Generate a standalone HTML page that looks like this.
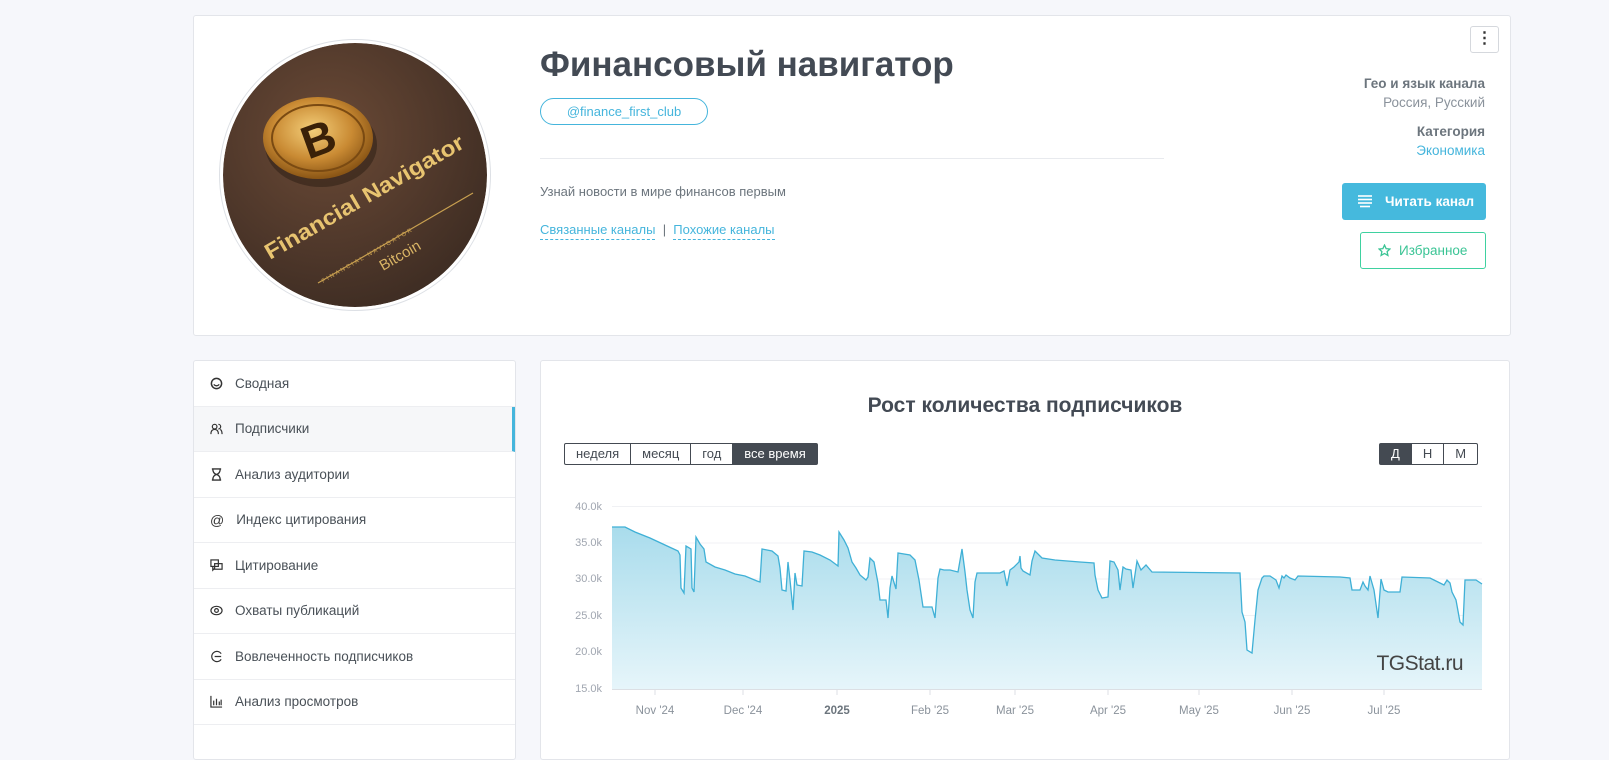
<!DOCTYPE html>
<html><head><meta charset="utf-8"><style>
*{box-sizing:border-box;margin:0;padding:0}
body{width:1609px;height:757px;overflow:hidden;background:#f6f7fb;font-family:"Liberation Sans","Noto Sans CJK SC",sans-serif;color:#495057;position:relative}
.card{position:absolute;background:#fff;border:1px solid #e3e5ea;border-radius:3px}
.a{position:absolute}
.nav div{height:45.5px;border-bottom:1px solid #edeef1;display:flex;align-items:center;padding-left:16px;font-size:13.5px;color:#495057}
.nav svg{margin-right:12px}
.seg{position:absolute;display:flex;border:1px solid #444a52;border-radius:2px;font-size:13px;height:22px}
.seg span{padding:0 11px;line-height:20px;border-right:1px solid #444a52;color:#444a52}
.seg span:last-child{border-right:0}
.seg .on{background:#444a52;color:#fff}
</style></head><body>
<div class="card" style="left:193px;top:15px;width:1318px;height:321px"></div>
<!-- avatar -->
<div class="a" style="left:219px;top:39px;width:272px;height:272px;border-radius:50%;border:1px solid #dde0e5;background:#fff"></div>
<svg class="a" style="left:223px;top:43px" width="264" height="264" viewBox="0 0 264 264">
<defs><radialGradient id="lg" cx="40%" cy="35%" r="75%"><stop offset="0" stop-color="#6b4a36"/><stop offset="0.6" stop-color="#4e372a"/><stop offset="1" stop-color="#3a2a21"/></radialGradient>
<radialGradient id="cg" cx="45%" cy="40%" r="60%"><stop offset="0" stop-color="#f4cf7a"/><stop offset="0.6" stop-color="#c98a33"/><stop offset="1" stop-color="#8a5515"/></radialGradient>
<clipPath id="cc"><circle cx="132" cy="132" r="132"/></clipPath></defs>
<g clip-path="url(#cc)">
<circle cx="132" cy="132" r="132" fill="url(#lg)"/>
<ellipse cx="98" cy="102" rx="56" ry="42" fill="#2a1c12" opacity="0.5"/>
<ellipse cx="95" cy="95" rx="55" ry="41" fill="url(#cg)"/>
<ellipse cx="95" cy="95" rx="46" ry="33" fill="none" stroke="#7a4a12" stroke-width="2"/>
<text x="95" y="112" text-anchor="middle" font-family="Liberation Sans" font-weight="bold" font-size="46" fill="#3a2108" transform="rotate(-20 95 95)">B</text>
<text x="47" y="217" font-family="Liberation Sans" font-weight="bold" font-size="22" fill="#e8c470" textLength="226" lengthAdjust="spacingAndGlyphs" transform="rotate(-30 47 217)">Financial Navigator</text>
<line x1="95" y1="240" x2="250" y2="150" stroke="#c9a050" stroke-width="1.2"/>
<text x="100" y="240" font-family="Liberation Sans" font-size="6" fill="#c9a050" letter-spacing="2" transform="rotate(-30 100 240)">FINANCIAL NAVIGATOR</text>
<text x="160" y="228" font-family="Liberation Sans" font-size="15" fill="#d9b465" transform="rotate(-30 160 228)">Bitcoin</text>
</g>
</svg>
<div class="a" style="left:540px;top:45px;font-size:35px;font-weight:bold;color:#434a54">Финансовый навигатор</div>
<div class="a" style="left:540px;top:98px;width:168px;height:27px;border:1px solid #45b5dc;border-radius:14px;color:#45b5dc;font-size:13px;text-align:center;line-height:25px">@finance_first_club</div>
<div class="a" style="left:540px;top:158px;width:624px;height:1px;background:#e8eaee"></div>
<div class="a" style="left:540px;top:184px;font-size:13px;color:#6c757d">Узнай новости в мире финансов первым</div>
<div class="a" style="left:540px;top:222px;font-size:13px;color:#45b5dc"><span style="border-bottom:1px dashed #45b5dc;padding-bottom:2px">Связанные каналы</span><span style="color:#6c757d"> &nbsp;| &nbsp;</span><span style="border-bottom:1px dashed #45b5dc;padding-bottom:2px">Похожие каналы</span></div>
<div class="a" style="left:1470px;top:26px;width:29px;height:27px;border:1px solid #d5d8dd;border-radius:3px;text-align:center;font-weight:bold;line-height:24px;font-size:16px;color:#333">⋮</div>
<div class="a" style="right:124px;top:74px;text-align:right;font-size:13.5px;line-height:19px">
<div style="font-weight:bold;color:#6c757d">Гео и язык канала</div><div style="color:#8a929b">Россия, Русский</div>
<div style="font-weight:bold;color:#6c757d;margin-top:10px">Категория</div><div style="color:#45b5dc">Экономика</div></div>
<div class="a" style="left:1342px;top:183px;width:144px;height:37px;background:#45b9dd;border-radius:3px;color:#fff;font-size:13.5px;font-weight:bold;line-height:37px;padding-left:43px">Читать канал
<svg class="a" style="left:16px;top:12px" width="14" height="13"><g stroke="#fff" stroke-width="1.6"><line x1="0" y1="1" x2="14" y2="1"/><line x1="0" y1="4.5" x2="14" y2="4.5"/><line x1="0" y1="8" x2="14" y2="8"/><line x1="2" y1="11.5" x2="12" y2="11.5"/></g></svg></div>
<div class="a" style="left:1360px;top:232px;width:126px;height:37px;border:1px solid #3fd1a0;border-radius:3px;color:#3bc495;font-size:13.5px;line-height:35px;padding-left:38px">Избранное
<svg class="a" style="left:17px;top:11px" width="13" height="13" viewBox="0 0 24 24"><path d="M12 2l3 6.5 7 .8-5.2 4.8 1.5 7L12 17.5 5.7 21.1l1.5-7L2 9.3l7-.8z" fill="none" stroke="#3bc495" stroke-width="2.4"/></svg></div>

<!-- nav -->
<div class="card nav" style="left:193px;top:360px;width:323px;height:400px;overflow:hidden">
<div><svg width="13" height="13" viewBox="0 0 14 14"><circle cx="7" cy="7" r="5.5" fill="none" stroke="#333" stroke-width="1.6"/><path d="M4 8q3 3 6 0" stroke="#333" fill="none" stroke-width="1.4"/></svg>Сводная</div>
<div style="background:#f6f7f9;border-right:3px solid #45b5dc"><svg width="13" height="13" viewBox="0 0 14 14" fill="none" stroke="#333" stroke-width="1.3"><circle cx="5" cy="5" r="2.5"/><path d="M1 13q0-5 4-5t4 5M9 2.5a2.5 2.5 0 010 5M11 8q2 1 2 5"/></svg>Подписчики</div>
<div><svg width="13" height="13" viewBox="0 0 14 14" fill="none" stroke="#333" stroke-width="1.4"><path d="M2 1h10M2 13h10M3 1q0 5 4 6q4 1 4 6M11 1q0 5-4 6q-4 1-4 6"/></svg>Анализ аудитории</div>
<div><span style="font-size:14px;margin-right:12px;color:#333">@</span>Индекс цитирования</div>
<div><svg width="13" height="13" viewBox="0 0 14 14" fill="none" stroke="#333" stroke-width="1.3"><rect x="1" y="1" width="8" height="7"/><rect x="5" y="5" width="8" height="6"/><path d="M3 8v4l2-2"/></svg>Цитирование</div>
<div><svg width="13" height="13" viewBox="0 0 14 14" fill="none" stroke="#333" stroke-width="1.3"><ellipse cx="7" cy="7" rx="6" ry="4.5"/><circle cx="7" cy="7" r="2"/></svg>Охваты публикаций</div>
<div><svg width="13" height="13" viewBox="0 0 14 14" fill="none" stroke="#333" stroke-width="1.3"><path d="M12 4a5.5 5.5 0 100 6M5 7h7"/></svg>Вовлеченность подписчиков</div>
<div><svg width="13" height="13" viewBox="0 0 14 14" fill="none" stroke="#333" stroke-width="1.3"><path d="M1 1v12h12M4 11V6M7 11V4M10 11V7M12 11V5"/></svg>Анализ просмотров</div>
</div>

<!-- chart card -->
<div class="card" style="left:540px;top:360px;width:970px;height:400px"></div>
<div class="a" style="left:540px;top:394px;width:970px;text-align:center;font-size:21px;font-weight:bold;color:#434a54">Рост количества подписчиков</div>
<div class="seg" style="left:564px;top:443px"><span>неделя</span><span>месяц</span><span>год</span><span class="on">все время</span></div>
<div class="seg" style="left:1379px;top:443px"><span class="on" style="padding:0 11px">Д</span><span>Н</span><span>М</span></div>
<svg class="a" style="left:0;top:0" width="1609" height="757">
<defs><linearGradient id="fg" x1="0" y1="0" x2="0" y2="1"><stop offset="0" stop-color="#a9dcec"/><stop offset="1" stop-color="#e6f5fa"/></linearGradient></defs>
<g stroke="#f0f1f4" stroke-width="1"><line x1="612" y1="506.5" x2="1482" y2="506.5"/><line x1="612" y1="543" x2="1482" y2="543"/><line x1="612" y1="579" x2="1482" y2="579"/><line x1="612" y1="615.5" x2="1482" y2="615.5"/><line x1="612" y1="652" x2="1482" y2="652"/></g>
<g font-family="Liberation Sans" font-size="11" fill="#a0a6b0" text-anchor="end"><text x="602" y="510">40.0k</text><text x="602" y="546">35.0k</text><text x="602" y="582">30.0k</text><text x="602" y="619">25.0k</text><text x="602" y="655">20.0k</text><text x="602" y="692">15.0k</text></g>
<path d="M612,527 L625,527 635,532 650,538 665,545 678,551 680,555 681,588 684,593 686,546 691,549 692,588 694,592 696,537 700,544 704,549 706,562 715,567 725,570 735,574 745,576 757,581 760,582 762,549 772,551 778,556 780,568 782,590 786,591 788,562 790,580 793,610 795,573 797,585 802,586 804,551 812,552 820,555 830,560 838,566 839,532 844,540 848,548 852,562 856,568 860,575 866,580 868,577 870,558 874,562 878,583 880,600 886,600 888,618 890,588 892,576 896,589 898,553 910,555 915,560 919,580 923,607 932,607 935,618 938,578 940,569 944,570 950,570 958,572 962,549 965,572 967,590 970,610 973,618 975,582 977,573 983,573 1000,573 1004,571 1007,586 1010,570 1014,567 1019,562 1020,556 1021,568 1023,571 1030,575 1032,561 1035,551 1042,558 1055,560 1080,562 1094,563 1095,575 1098,590 1102,598 1108,597 1110,561 1114,562 1118,570 1120,590 1123,567 1126,569 1131,570 1133,588 1137,561 1141,570 1146,565 1152,572 1240,573 1242,612 1245,622 1247,650 1252,653 1255,620 1258,590 1262,578 1264,576 1270,576 1276,580 1279,588 1282,576 1284,578 1286,575 1290,578 1295,580 1298,576 1340,577 1350,578 1352,590 1360,590 1363,582 1365,586 1368,590 1370,576 1374,590 1378,618 1381,579 1384,590 1388,592 1400,592 1402,577 1430,578 1440,583 1444,585 1447,580 1450,583 1452,592 1456,600 1460,622 1463,625 1465,580 1476,580 1482,584 L1482,689 L612,689 Z" fill="url(#fg)"/>
<path d="M612,527 L625,527 635,532 650,538 665,545 678,551 680,555 681,588 684,593 686,546 691,549 692,588 694,592 696,537 700,544 704,549 706,562 715,567 725,570 735,574 745,576 757,581 760,582 762,549 772,551 778,556 780,568 782,590 786,591 788,562 790,580 793,610 795,573 797,585 802,586 804,551 812,552 820,555 830,560 838,566 839,532 844,540 848,548 852,562 856,568 860,575 866,580 868,577 870,558 874,562 878,583 880,600 886,600 888,618 890,588 892,576 896,589 898,553 910,555 915,560 919,580 923,607 932,607 935,618 938,578 940,569 944,570 950,570 958,572 962,549 965,572 967,590 970,610 973,618 975,582 977,573 983,573 1000,573 1004,571 1007,586 1010,570 1014,567 1019,562 1020,556 1021,568 1023,571 1030,575 1032,561 1035,551 1042,558 1055,560 1080,562 1094,563 1095,575 1098,590 1102,598 1108,597 1110,561 1114,562 1118,570 1120,590 1123,567 1126,569 1131,570 1133,588 1137,561 1141,570 1146,565 1152,572 1240,573 1242,612 1245,622 1247,650 1252,653 1255,620 1258,590 1262,578 1264,576 1270,576 1276,580 1279,588 1282,576 1284,578 1286,575 1290,578 1295,580 1298,576 1340,577 1350,578 1352,590 1360,590 1363,582 1365,586 1368,590 1370,576 1374,590 1378,618 1381,579 1384,590 1388,592 1400,592 1402,577 1430,578 1440,583 1444,585 1447,580 1450,583 1452,592 1456,600 1460,622 1463,625 1465,580 1476,580 1482,584" fill="none" stroke="#3fb0d6" stroke-width="1.3"/>
<line x1="612" y1="689.5" x2="1482" y2="689.5" stroke="#dcdfe4"/>
<g stroke="#dcdfe4"><line x1="655" y1="689" x2="655" y2="695"/><line x1="743" y1="689" x2="743" y2="695"/><line x1="837" y1="689" x2="837" y2="695"/><line x1="930" y1="689" x2="930" y2="695"/><line x1="1015" y1="689" x2="1015" y2="695"/><line x1="1108" y1="689" x2="1108" y2="695"/><line x1="1199" y1="689" x2="1199" y2="695"/><line x1="1292" y1="689" x2="1292" y2="695"/><line x1="1384" y1="689" x2="1384" y2="695"/></g>
<g font-family="Liberation Sans" font-size="11.5" fill="#8a929b" text-anchor="middle"><text x="655" y="714">Nov '24</text><text x="743" y="714">Dec '24</text><text x="837" y="714" font-weight="bold" fill="#6c757d">2025</text><text x="930" y="714">Feb '25</text><text x="1015" y="714">Mar '25</text><text x="1108" y="714">Apr '25</text><text x="1199" y="714">May '25</text><text x="1292" y="714">Jun '25</text><text x="1384" y="714">Jul '25</text></g>
<text x="1463" y="670" font-family="Liberation Sans" font-size="21" fill="#444" text-anchor="end" letter-spacing="-0.5">TGStat.ru</text>
</svg>
</body></html>
